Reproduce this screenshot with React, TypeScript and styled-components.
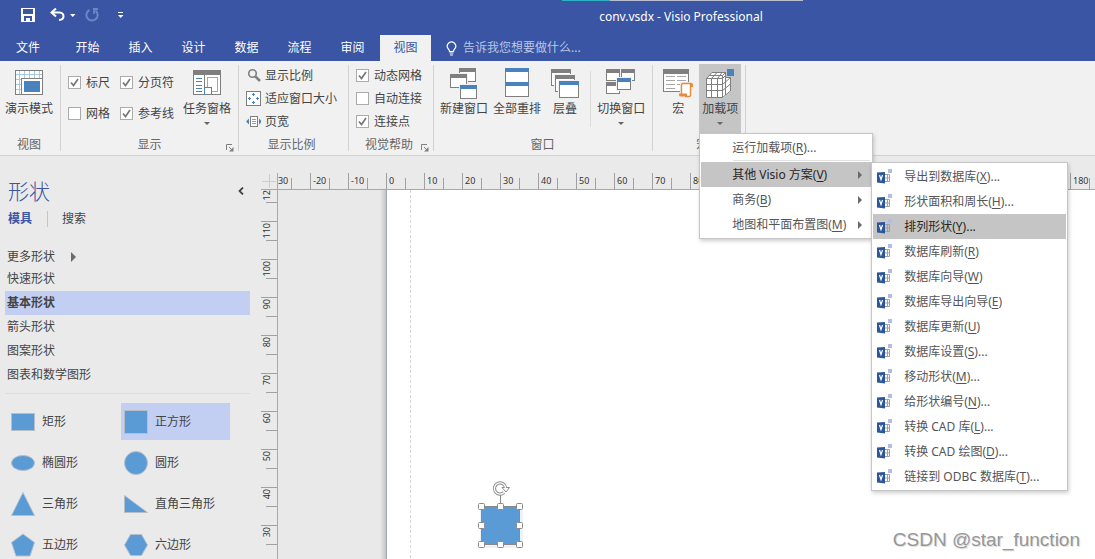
import React, { useEffect, useState } from 'react';
import styled, { createGlobalStyle } from 'styled-components';

const GRAY = '#7f7f7f';
const BLUE = '#4a82bd';
const BRAND = '#3955a3';
const SHAPE = '#5b9bd5';

const GlobalStyle = createGlobalStyle`
  * { box-sizing: border-box; }
  body {
    margin: 0;
    font: 12px/16px "Noto Sans", "Noto Sans CJK SC", sans-serif;
    color: #444;
    background: #eaeaea;
  }
  button {
    font: inherit;
    color: inherit;
    background: none;
    border: 0;
    padding: 0;
    margin: 0;
    text-align: left;
    white-space: nowrap;
  }
  svg { display: block; flex: none; }
  ul { list-style: none; margin: 0; padding: 0; }
`;

const Shell = styled.div`
  display: flex;
  flex-direction: column;
  height: 100vh;
  overflow: hidden;
  position: relative;
`;

/* ---------- title bar and tabs ---------- */

const Header = styled.header`
  background: ${BRAND};
  color: #fff;
`;

const TitleBar = styled.div`
  display: flex;
  align-items: flex-start;
  height: 35px;
  background: linear-gradient(90deg, #2fb3c4 48px, #b9bfd0 48px) 562px 0 / 241px 1px no-repeat;
`;

const QuickAccess = styled.div`
  display: flex;
  align-items: center;
  width: 267px;
  height: 30px;
  padding-left: 21px;
`;

const QuickButton = styled.button<{ $gap: number }>`
  margin-right: ${(p) => p.$gap}px;
`;

const Title = styled.h1`
  flex: 1;
  margin: 0;
  font-size: 12px;
  line-height: 34px;
  font-weight: 400;
  text-align: center;
`;

const TabStrip = styled.nav`
  display: flex;
  align-items: stretch;
  height: 26px;
`;

const FileTab = styled.button`
  width: 60px;
  padding-left: 16px;
`;

const Tab = styled.button<{ $active?: boolean }>`
  width: 51px;
  margin-left: 2px;
  text-align: center;
  background: ${(p) => (p.$active ? '#f1f1f1' : 'transparent')};
  color: ${(p) => (p.$active ? BRAND : '#fff')};
`;

const TellMe = styled.button`
  display: flex;
  align-items: center;
  gap: 6px;
  margin-left: 15px;
  color: #b9c6e8;
`;

/* ---------- ribbon ---------- */

const Ribbon = styled.div`
  display: flex;
  height: 95px;
  background: #f1f1f1;
  border-bottom: 1px solid #d2d2d2;
`;

const Group = styled.section<{ $left: number; $right: number }>`
  position: relative;
  display: flex;
  flex-direction: column;
  padding: 3px ${(p) => p.$right}px 2px ${(p) => p.$left}px;
`;

const GroupBody = styled.div`
  display: flex;
  height: 69px;
`;

const GroupName = styled.div`
  margin-top: 4px;
  text-align: center;
  color: #666;
`;

const Divider = styled.div`
  width: 1px;
  margin: 4px 0;
  background: #d2d2d2;
`;

const InnerDivider = styled.div`
  width: 1px;
  height: 56px;
  margin: 7px 6px 0 11px;
  background: #dcdcdc;
`;

const Launcher = styled.button`
  position: absolute;
  right: 4px;
  bottom: 3px;
`;

const BigButton = styled.button<{ $gap?: number; $pad?: number; $open?: boolean }>`
  display: flex;
  flex-direction: column;
  align-items: center;
  height: 69px;
  margin-left: ${(p) => p.$gap || 0}px;
  padding: 4px ${(p) => p.$pad || 0}px 0;
  background: ${(p) => (p.$open ? '#c5c5c5' : 'transparent')};
  svg { margin-bottom: 1px; }
`;

const Caret = styled.span`
  margin-top: 5px;
  border: 3px solid transparent;
  border-top-color: #666;
  border-bottom: 0;
`;

const CheckGrid = styled.div`
  display: grid;
  grid-template-columns: auto auto;
  grid-auto-rows: 31px;
  column-gap: 10px;
  margin-right: 9px;
  padding-top: 3px;
`;

const Stack = styled.div`
  display: grid;
  grid-auto-rows: 23px;
`;

const CheckLabel = styled.label`
  display: flex;
  align-items: center;
  gap: 5px;
  white-space: nowrap;
`;

const CheckBox = styled.span`
  display: grid;
  width: 13px;
  height: 13px;
  & > * { grid-area: 1 / 1; }
  input {
    appearance: none;
    width: 13px;
    height: 13px;
    margin: 0;
    background: #fff;
    border: 1px solid #ababab;
  }
  svg { visibility: hidden; pointer-events: none; }
  input:checked + svg { visibility: visible; }
`;

const SmallButton = styled.button`
  display: flex;
  align-items: center;
  gap: 4px;
`;

/* ---------- menus ---------- */

const MenuAnchor = styled.div`
  position: relative;
  margin-left: 6px;
`;

const Menu = styled.ul<{ $x: number; $y: number; $w: number }>`
  position: absolute;
  z-index: 5;
  left: ${(p) => p.$x}px;
  top: ${(p) => p.$y}px;
  width: ${(p) => p.$w}px;
  padding: 1px;
  background: #fff;
  border: 1px solid #c6c6c6;
  box-shadow: 1px 2px 4px rgba(0, 0, 0, 0.2);
`;

const MenuRow = styled.li`
  position: relative;
`;

const MenuButton = styled.button<{ $on?: boolean; $indent: number }>`
  display: flex;
  align-items: center;
  width: 100%;
  height: 25px;
  gap: 11px;
  padding: 0 9px 0 ${(p) => p.$indent}px;
  color: ${(p) => (p.$on ? '#262626' : '#555')};
  background: ${(p) => (p.$on ? '#c5c5c5' : 'transparent')};
  u { text-underline-offset: 2px; }
`;

const MenuText = styled.span`
  flex: 1;
`;

const MenuRule = styled.li`
  height: 1px;
  margin: 0 1px 1px 32px;
  background: #e1e1e1;
`;

/* ---------- workspace ---------- */

const Workspace = styled.main`
  flex: 1;
  min-height: 0;
  display: flex;
`;

const Sidebar = styled.aside`
  flex: none;
  width: 261px;
  padding: 21px 11px 0 5px;
`;

const SidebarHead = styled.div`
  display: flex;
  justify-content: space-between;
  align-items: center;
  padding: 0 6px 0 3px;
`;

const SidebarTitle = styled.h2`
  margin: 0;
  font-size: 21px;
  line-height: 28px;
  font-weight: 300;
  color: ${BRAND};
`;

const SidebarTabs = styled.div`
  display: flex;
  align-items: center;
  height: 28px;
  padding-left: 3px;
`;

const SidebarTab = styled.button<{ $active?: boolean }>`
  color: ${(p) => (p.$active ? BRAND : '#444')};
  font-weight: ${(p) => (p.$active ? 700 : 400)};
  & + & {
    margin-left: 15px;
    padding-left: 14px;
    border-left: 1px solid #c6c6c6;
  }
`;

const StencilList = styled.ul`
  margin-top: 13px;
  padding-bottom: 6px;
  border-bottom: 1px solid #dcdcdc;
`;

const Stencil = styled.button<{ $active?: boolean; $short?: boolean }>`
  display: flex;
  align-items: center;
  gap: 16px;
  width: 100%;
  height: ${(p) => (p.$short ? 21 : 24)}px;
  padding-left: 2px;
  font-weight: ${(p) => (p.$active ? 700 : 400)};
  background: ${(p) => (p.$active ? '#c2cef2' : 'transparent')};
`;

const ShapeGrid = styled.div`
  display: grid;
  grid-template-columns: 109px 109px;
  grid-auto-rows: 37px;
  gap: 4px;
  padding: 9px 0 0 3px;
`;

const ShapeButton = styled.button<{ $active?: boolean }>`
  display: flex;
  align-items: center;
  gap: 7px;
  padding-left: 3px;
  background: ${(p) => (p.$active ? '#c2cef2' : 'transparent')};
`;

const Drawing = styled.div`
  flex: 1;
  min-width: 0;
  display: grid;
  grid-template-columns: 17px minmax(0, 1fr);
  grid-template-rows: 17px minmax(0, 1fr);
  padding-top: 17px;
`;

const Corner = styled.div`
  border-right: 1px solid #a8a8a8;
  border-bottom: 1px solid #a8a8a8;
`;

const RulerTop = styled.div`
  overflow: hidden;
  border-bottom: 1px solid #a8a8a8;
`;

const TrackTop = styled.div`
  display: flex;
  width: max-content;
  height: 16px;
  margin-left: -6px;
`;

const MarkTop = styled.span`
  width: 38px;
  padding-left: 2px;
  font: 9px/15px "Noto Sans", sans-serif;
  color: #333;
  border-left: 1px solid #a0a0a0;
  background: linear-gradient(#a0a0a0, #a0a0a0) 18px 100% / 1px 11px no-repeat;
`;

const RulerSide = styled.div`
  overflow: hidden;
  border-right: 1px solid #a8a8a8;
`;

const TrackSide = styled.div`
  margin-top: -7px;
`;

const MarkSide = styled.div`
  display: flex;
  height: 38px;
  border-top: 1px solid #a0a0a0;
  background: linear-gradient(#a0a0a0, #a0a0a0) 100% 18px / 11px 1px no-repeat;
  span {
    height: max-content;
    padding-bottom: 1px;
    font: 9px/11px "Noto Sans", sans-serif;
    color: #333;
    writing-mode: vertical-rl;
    transform: rotate(180deg);
  }
`;

const Canvas = styled.div`
  display: flex;
  background: #e9e9e9;
  overflow: hidden;
`;

const Margin = styled.div`
  width: 108px;
  background: linear-gradient(90deg, rgba(0, 0, 0, 0), rgba(0, 0, 0, 0.16)) right / 6px 100% no-repeat;
`;

const Paper = styled.div`
  position: relative;
  flex: 1;
  background: #fff;
  border-left: 1px solid #a0a8b2;
`;

const PageBreak = styled.div`
  width: 1px;
  height: 100%;
  margin-left: 23px;
  background: repeating-linear-gradient(#d9d9d9 0 3px, #fff 3px 5px);
`;

const Selection = styled.svg`
  position: absolute;
  left: 88px;
  top: 288px;
`;

const Watermark = styled.div`
  position: absolute;
  right: 15px;
  bottom: 6px;
  font: 19px/26px "Liberation Sans", sans-serif;
  color: #979797;
  text-shadow: 1px 1px 0 #e0e0e0;
`;

/* ---------- icons ---------- */

const Win = ({ x, y, w, h, blue }: { x: number; y: number; w: number; h: number; blue?: boolean }) => (
  <g>
    <rect x={x - 1} y={y - 1} width={w + 2} height={h + 2} fill="#f1f1f1" />
    <rect x={x + 0.5} y={y + 0.5} width={w - 1} height={h - 1} fill="#fff" stroke={GRAY} />
    <rect x={x} y={y} width={w} height="4" fill={blue ? BLUE : GRAY} />
  </g>
);

const IconBox = ({ w, children }: { w: number; children: React.ReactNode }) => (
  <svg width={w} height="32" viewBox={`0 0 ${w} 32`} shapeRendering="crispEdges">{children}</svg>
);

const PresentIcon = () => (
  <IconBox w={28}>
    <rect x="0.5" y="2.5" width="27" height="24" fill="#fff" stroke={GRAY} />
    <path d="M4.5 3v23M9.5 3v7M14.5 3v7M19.5 3v7M24.5 3v7M1 6.5h26M1 11.5h5M1 16.5h5M1 21.5h5" stroke="#a9c8e4" />
    <path d="M6.5 26V10.5H27V26z" fill="#fff" />
    <path d="M6.5 26V10.5H27" stroke={GRAY} fill="none" />
    <rect x="9" y="13" width="16" height="11" fill={BLUE} />
  </IconBox>
);

const TaskPaneIcon = () => (
  <IconBox w={28}>
    <rect x="0.5" y="2.5" width="27" height="24" fill="#fff" stroke={GRAY} />
    <rect x="0" y="2" width="28" height="5" fill={GRAY} />
    <path d="M3 10.5h6M3 13.5h6M3 17.5h6M3 20.5h6M3 23.5h6" stroke={BLUE} />
    <path d="M11.5 7v20" stroke={GRAY} />
    <rect x="14.5" y="9.5" width="10" height="14" fill="#fff" stroke="#a6a6a6" />
    <path d="M11.5 27V19.5H18.5V27" fill="#fff" stroke={BLUE} />
    <path d="M12 26.5h15" stroke={GRAY} />
  </IconBox>
);

const NewWindowIcon = () => (
  <IconBox w={28}>
    <Win x={9} y={0} w={17} h={14} />
    <Win x={0} y={6} w={17} h={14} />
    <Win x={10} y={17} w={17} h={14} blue />
  </IconBox>
);

const ArrangeIcon = () => (
  <IconBox w={24}>
    <rect x="0.5" y="0.5" width="23" height="28" fill="#fff" stroke={GRAY} />
    <rect width="24" height="4" fill={BLUE} />
    <rect y="14" width="24" height="4" fill={BLUE} />
  </IconBox>
);

const CascadeIcon = () => (
  <IconBox w={28}>
    <Win x={0} y={1} w={20} h={17} />
    <Win x={4} y={7} w={20} h={17} />
    <Win x={8} y={13} w={20} h={17} blue />
  </IconBox>
);

const SwitchIcon = () => (
  <IconBox w={30}>
    <Win x={0} y={1} w={14} h={12} />
    <Win x={15} y={1} w={14} h={12} />
    <Win x={0} y={14} w={14} h={12} />
    <Win x={11} y={10} w={14} h={12} blue />
  </IconBox>
);

const MacroIcon = () => (
  <svg width="30" height="32" viewBox="0 0 30 32">
    <rect x="0.5" y="1.5" width="25" height="22" fill="#fff" stroke={GRAY} />
    <rect y="1" width="26" height="5" fill={GRAY} />
    <path d="M3 8.5h9M14 8.5h9M3 12.5h9M14 12.5h9M3 16.5h9M14 16.5h4M3 20.5h9" stroke="#a6a6a6" />
    <path d="M17 14h13v10h-2v5H15v-5h2z" fill="#f1f1f1" />
    <path d="M18.500 26V17q0-1.500 1.500-1.500H27.500V27q0 1.500-1.500 1.500H22" fill="#fff" stroke="#e68a3e" strokeWidth="1.400" />
    <path d="M27 15h1.500q1.500 0 1.500 2v2h-3zM16 25.500h8v1.500q0 1.500 1.500 1.500H18q-2 0-2-1.500z" fill="#e68a3e" />
  </svg>
);

const AddInIcon = () => (
  <svg width="30" height="32" viewBox="0 0 30 32">
    <path d="M1.500 10.500L7 4.500H20.500V9.500H25.500V23.500L18.500 29.500H1.500Z" fill="#fff" />
    <g fill="none" stroke={GRAY}>
      <path d="M1.500 10.500H17.500V29.500H1.500ZM6.500 10.500V29.500M12.500 10.500V29.500M1.500 16.500H17.500M1.500 22.500H17.500" />
      <path d="M1.500 10.500L7 4.500H20.500L17.500 7.500M4.500 7.500H17.500V10.500M6.500 10.500L12 4.500M12.500 10.500L17 4.500" />
      <path d="M17.500 10.500L20.500 7.500M17.500 16.500L25.500 9.500M17.500 22.500L25.500 16M17.500 29.500L25.500 23V9.500H20.500V27M20.500 4.500V9.500" />
    </g>
    <rect x="21" y="0" width="9" height="9" fill="#c5c5c5" />
    <rect x="22" y="1" width="7" height="7" fill={BLUE} />
  </svg>
);

const CheckMark = () => (
  <svg width="13" height="13" viewBox="0 0 13 13">
    <path d="M3 6.500L5.500 9.500L10 3" fill="none" stroke="#777" strokeWidth="1.700" />
  </svg>
);

const LauncherIcon = () => (
  <svg width="8" height="8" viewBox="0 0 8 8">
    <path d="M0.500 6V0.500H6M3 3L6 6" fill="none" stroke={GRAY} />
    <path d="M7.500 3V7.500H3z" fill={GRAY} />
  </svg>
);

const ZoomIcon = () => (
  <svg width="15" height="15" viewBox="0 0 15 15">
    <circle cx="6.500" cy="5.500" r="3.800" fill="none" stroke={GRAY} strokeWidth="1.600" />
    <path d="M9.300 8.300L14 13" stroke={GRAY} strokeWidth="2.600" />
  </svg>
);

const FitIcon = () => (
  <svg width="15" height="15" viewBox="0 0 15 15" shapeRendering="crispEdges">
    <rect x="0.500" y="0.500" width="14" height="14" fill="#fff" stroke={GRAY} />
    <path d="M7.500 2v3M7.500 10v3M2 7.500h3M10 7.500h3M6 3.500h3M6 11.500h3M3.500 6v3M11.500 6v3" stroke={BLUE} />
  </svg>
);

const PageWidthIcon = () => (
  <svg width="15" height="15" viewBox="0 0 15 15">
    <rect x="4.500" y="2.500" width="7" height="10" fill="#fff" stroke={GRAY} />
    <path d="M6 5.500h4M6 7.500h4M6 9.500h4" stroke="#999" />
    <path d="M3 4.500V10.500L0 7.500zM13 4.500V10.500L16 7.500z" fill={BLUE} />
  </svg>
);

const SaveIcon = () => (
  <svg width="14" height="14" viewBox="0 0 14 14">
    <path fillRule="evenodd" d="M0 0H14V14H0ZM2 1V6H12V1ZM3 8V13H5V10H9V13H11V8Z" fill="#fff" />
    <rect x="6" y="11" width="2" height="2" fill="#fff" />
  </svg>
);

const UndoIcon = () => (
  <svg width="15" height="14" viewBox="0 0 15 14">
    <path d="M2 4.500H9.500Q13.500 4.800 13.500 8.300T9 12" fill="none" stroke="#fff" strokeWidth="2" />
    <path d="M6 0.500L1.500 4.500L6 8.500" fill="none" stroke="#fff" strokeWidth="2" />
  </svg>
);

const RedoIcon = () => (
  <svg width="14" height="14" viewBox="0 0 14 14">
    <path d="M4.500 2A5.600 5.600 0 1 0 10.500 2.600" fill="none" stroke="#6f86c4" strokeWidth="2" />
    <path d="M8 1H13M9 0.500V6" fill="none" stroke="#6f86c4" strokeWidth="1.800" />
  </svg>
);

const DownIcon = ({ bar }: { bar?: boolean }) => (
  <svg width="6" height="7" viewBox="0 0 6 7">
    {bar && <path d="M0 0.500H5" stroke="#fff" />}
    <path d={bar ? 'M0 3H5.500L2.700 6z' : 'M0 2H5.500L2.700 5z'} fill="#fff" />
  </svg>
);

const BulbIcon = () => (
  <svg width="11" height="15" viewBox="0 0 11 15">
    <path d="M3.500 10.500Q3.500 9 2 7.500A4.200 4.200 0 1 1 9 7.500Q7.500 9 7.500 10.500Z" fill="none" stroke="#fff" strokeWidth="1.200" />
    <path d="M3.500 12H7.500M4 14H7" stroke="#fff" strokeWidth="1.200" />
  </svg>
);

const RightArrow = ({ big }: { big?: boolean }) => (
  <svg width={big ? 5 : 4} height={big ? 10 : 8} viewBox="0 0 4 8">
    <path d="M0 0L4 4L0 8z" fill="#6a6a6a" />
  </svg>
);

const VisioIcon = () => (
  <svg width="16" height="17" viewBox="0 0 16 17">
    <path d="M8 6.500H12.500V13.500H8M8 10H12.500M10.500 6.500V13.500" fill="none" stroke="#a0a0a0" />
    <path d="M0 4.500L8 4V15.500L0 14.500z" fill="#2b579a" />
    <path d="M2.500 7L4 11.500L5.500 7" fill="none" stroke="#fff" strokeWidth="1.200" />
    <rect x="11" y="1" width="4" height="4" fill="#b0bde6" />
  </svg>
);

/* ---------- data ---------- */

type Entry = { text: string; k: string; tail?: string; on?: boolean };

const addIns: Entry[] = [
  { text: '导出到数据库', k: 'X', tail: '...' },
  { text: '形状面积和周长', k: 'H', tail: '...' },
  { text: '排列形状', k: 'Y', tail: '...', on: true },
  { text: '数据库刷新', k: 'R' },
  { text: '数据库向导', k: 'W' },
  { text: '数据库导出向导', k: 'E' },
  { text: '数据库更新', k: 'U' },
  { text: '数据库设置', k: 'S', tail: '...' },
  { text: '移动形状', k: 'M', tail: '...' },
  { text: '给形状编号', k: 'N', tail: '...' },
  { text: '转换 CAD 库', k: 'L', tail: '...' },
  { text: '转换 CAD 绘图', k: 'D', tail: '...' },
  { text: '链接到 ODBC 数据库', k: 'T', tail: '...' },
];

const shapes: { name: string; art: React.ReactNode; on?: boolean }[] = [
  { name: '矩形', art: <rect x="0.500" y="3.500" width="23" height="17" /> },
  { name: '正方形', art: <rect x="0.500" y="0.500" width="23" height="23" />, on: true },
  { name: '椭圆形', art: <ellipse cx="12" cy="12" rx="11.500" ry="7.500" /> },
  { name: '圆形', art: <circle cx="12" cy="12" r="11.500" /> },
  { name: '三角形', art: <path d="M12 0.500L23.500 23.500H0.500z" /> },
  { name: '直角三角形', art: <path d="M0.500 3.500L23.500 20.500H0.500z" /> },
  { name: '五边形', art: <path d="M12 1L23.500 9.500L19 23H5L0.500 9.500z" /> },
  { name: '六边形', art: <path d="M6.500 1.500H17.500L23.500 12L17.500 22.500H6.500L0.500 12z" /> },
];

const STEP = 38;

/* Number of ruler marks that fill the window in each direction. */
function useMarkCounts() {
  const measure = () => ({
    across: Math.ceil((window.innerWidth - 272) / STEP),
    down: Math.ceil((window.innerHeight - 183) / STEP),
  });
  const [counts, setCounts] = useState(measure);
  useEffect(() => {
    const update = () => setCounts(measure());
    window.addEventListener('resize', update);
    return () => window.removeEventListener('resize', update);
  }, []);
  return counts;
}

/* ---------- parts ---------- */

const Check = ({ label, on }: { label: string; on?: boolean }) => (
  <CheckLabel>
    <CheckBox>
      <input type="checkbox" defaultChecked={on} />
      <CheckMark />
    </CheckBox>
    {label}
  </CheckLabel>
);

const EntryText = ({ text, k, tail }: Entry) => (
  <MenuText>{text}(<u>{k}</u>){tail}</MenuText>
);

const SelectedShape = () => (
  <Selection width="48" height="72" viewBox="0 0 48 72">
    <rect x="5" y="28" width="43" height="42" fill="#eef3fb" />
    <path d="M25.500 17V27" stroke="#8a8a8a" />
    <rect x="6.500" y="28.500" width="38" height="38" fill={SHAPE} stroke="#8a8a8a" />
    <path d="M29 14.500A5.600 5.600 0 1 1 30.600 9.500" fill="none" stroke="#8a8a8a" strokeWidth="3.200" />
    <path d="M27 9.500H34.500L31 14z" fill="#fff" stroke="#8a8a8a" />
    <path d="M29 14.500A5.600 5.600 0 1 1 30.600 10.500" fill="none" stroke="#fff" strokeWidth="1.300" />
    {[3, 22, 41].map((y) =>
      [3, 22, 41].map((x) =>
        x === 22 && y === 22 ? null : (
          <rect key={`${x}-${y}`} x={x + 0.5} y={y + 22.5} width="6" height="6" rx="1" fill="#fff" stroke="#8a8a8a" />
        ),
      ),
    )}
  </Selection>
);

export default function App() {
  const { across, down } = useMarkCounts();
  const topMarks = Array.from({ length: across }, (_, i) => (i === 0 ? '-30' : String((i - 3) * 10)));
  const sideMarks = Array.from({ length: down }, (_, i) => String(120 - i * 10));

  return (
    <Shell>
      <GlobalStyle />
      <Header>
        <TitleBar>
          <QuickAccess>
            <QuickButton $gap={15} aria-label="保存"><SaveIcon /></QuickButton>
            <QuickButton $gap={5} aria-label="撤消"><UndoIcon /></QuickButton>
            <QuickButton $gap={9} aria-label="撤消选项"><DownIcon /></QuickButton>
            <QuickButton $gap={19} aria-label="恢复"><RedoIcon /></QuickButton>
            <QuickButton $gap={0} aria-label="自定义"><DownIcon bar /></QuickButton>
          </QuickAccess>
          <Title>conv.vsdx - Visio Professional</Title>
        </TitleBar>
        <TabStrip>
          <FileTab>文件</FileTab>
          {['开始', '插入', '设计', '数据', '流程', '审阅', '视图'].map((t) => (
            <Tab key={t} $active={t === '视图'}>{t}</Tab>
          ))}
          <TellMe><BulbIcon />告诉我您想要做什么...</TellMe>
        </TabStrip>
      </Header>

      <Ribbon>
        <Group $left={5} $right={7}>
          <GroupBody>
            <BigButton><PresentIcon />演示模式</BigButton>
          </GroupBody>
          <GroupName>视图</GroupName>
        </Group>
        <Divider />
        <Group $left={7} $right={7}>
          <GroupBody>
            <CheckGrid>
              <Check label="标尺" on />
              <Check label="分页符" on />
              <Check label="网格" />
              <Check label="参考线" on />
            </CheckGrid>
            <BigButton><TaskPaneIcon />任务窗格<Caret /></BigButton>
          </GroupBody>
          <GroupName>显示</GroupName>
          <Launcher aria-label="显示选项"><LauncherIcon /></Launcher>
        </Group>
        <Divider />
        <Group $left={7} $right={11}>
          <GroupBody>
            <Stack>
              <SmallButton><ZoomIcon />显示比例</SmallButton>
              <SmallButton><FitIcon />适应窗口大小</SmallButton>
              <SmallButton><PageWidthIcon />页宽</SmallButton>
            </Stack>
          </GroupBody>
          <GroupName>显示比例</GroupName>
        </Group>
        <Divider />
        <Group $left={7} $right={11}>
          <GroupBody>
            <Stack>
              <Check label="动态网格" on />
              <Check label="自动连接" />
              <Check label="连接点" on />
            </Stack>
          </GroupBody>
          <GroupName>视觉帮助</GroupName>
          <Launcher aria-label="视觉帮助选项"><LauncherIcon /></Launcher>
        </Group>
        <Divider />
        <Group $left={6} $right={7}>
          <GroupBody>
            <BigButton><NewWindowIcon />新建窗口</BigButton>
            <BigButton $gap={5}><ArrangeIcon />全部重排</BigButton>
            <BigButton $gap={10}><CascadeIcon />层叠</BigButton>
            <InnerDivider />
            <BigButton><SwitchIcon />切换窗口<Caret /></BigButton>
          </GroupBody>
          <GroupName>窗口</GroupName>
        </Group>
        <Divider />
        <Group $left={10} $right={4}>
          <GroupBody>
            <BigButton><MacroIcon />宏</BigButton>
            <MenuAnchor>
              <BigButton $pad={3} $open aria-expanded="true"><AddInIcon />加载项<Caret /></BigButton>
              <Menu $x={0} $y={69} $w={174}>
                <MenuRow>
                  <MenuButton $indent={31}><EntryText text="运行加载项" k="R" tail="..." /></MenuButton>
                </MenuRow>
                <MenuRule />
                <MenuRow>
                  <MenuButton $indent={31} $on><EntryText text="其他 Visio 方案" k="V" /><RightArrow /></MenuButton>
                  <Menu $x={170} $y={0} $w={197}>
                    {addIns.map((e) => (
                      <MenuRow key={e.k}>
                        <MenuButton $indent={4} $on={e.on}><VisioIcon /><EntryText {...e} /></MenuButton>
                      </MenuRow>
                    ))}
                  </Menu>
                </MenuRow>
                <MenuRow>
                  <MenuButton $indent={31}><EntryText text="商务" k="B" /><RightArrow /></MenuButton>
                </MenuRow>
                <MenuRow>
                  <MenuButton $indent={31}><EntryText text="地图和平面布置图" k="M" /><RightArrow /></MenuButton>
                </MenuRow>
              </Menu>
            </MenuAnchor>
          </GroupBody>
          <GroupName>宏</GroupName>
        </Group>
        <Divider />
      </Ribbon>

      <Workspace>
        <Sidebar>
          <SidebarHead>
            <SidebarTitle>形状</SidebarTitle>
            <button aria-label="折叠">
              <svg width="6" height="8" viewBox="0 0 6 8">
                <path d="M5 0.500L1.500 4L5 7.500" fill="none" stroke="#444" strokeWidth="1.800" />
              </svg>
            </button>
          </SidebarHead>
          <SidebarTabs>
            <SidebarTab $active>模具</SidebarTab>
            <SidebarTab>搜索</SidebarTab>
          </SidebarTabs>
          <StencilList>
            <li><Stencil $short>更多形状<RightArrow big /></Stencil></li>
            {['快速形状', '基本形状', '箭头形状', '图案形状', '图表和数学图形'].map((s) => (
              <li key={s}><Stencil $active={s === '基本形状'}>{s}</Stencil></li>
            ))}
          </StencilList>
          <ShapeGrid>
            {shapes.map((s) => (
              <ShapeButton key={s.name} $active={s.on}>
                <svg width="24" height="24" viewBox="0 0 24 24" fill={SHAPE} stroke="#b5bfca">{s.art}</svg>
                {s.name}
              </ShapeButton>
            ))}
          </ShapeGrid>
        </Sidebar>
        <Drawing>
          <Corner>
            <svg width="16" height="16" viewBox="0 0 16 16">
              <path d="M8.500 1V15M1 8.500H15" stroke="#cccccc" />
            </svg>
          </Corner>
          <RulerTop>
            <TrackTop>{topMarks.map((m) => <MarkTop key={m}>{m}</MarkTop>)}</TrackTop>
          </RulerTop>
          <RulerSide>
            <TrackSide>{sideMarks.map((m) => <MarkSide key={m}><span>{m}</span></MarkSide>)}</TrackSide>
          </RulerSide>
          <Canvas>
            <Margin />
            <Paper>
              <PageBreak />
              <SelectedShape />
            </Paper>
          </Canvas>
        </Drawing>
      </Workspace>
      <Watermark>CSDN @star_function</Watermark>
    </Shell>
  );
}
